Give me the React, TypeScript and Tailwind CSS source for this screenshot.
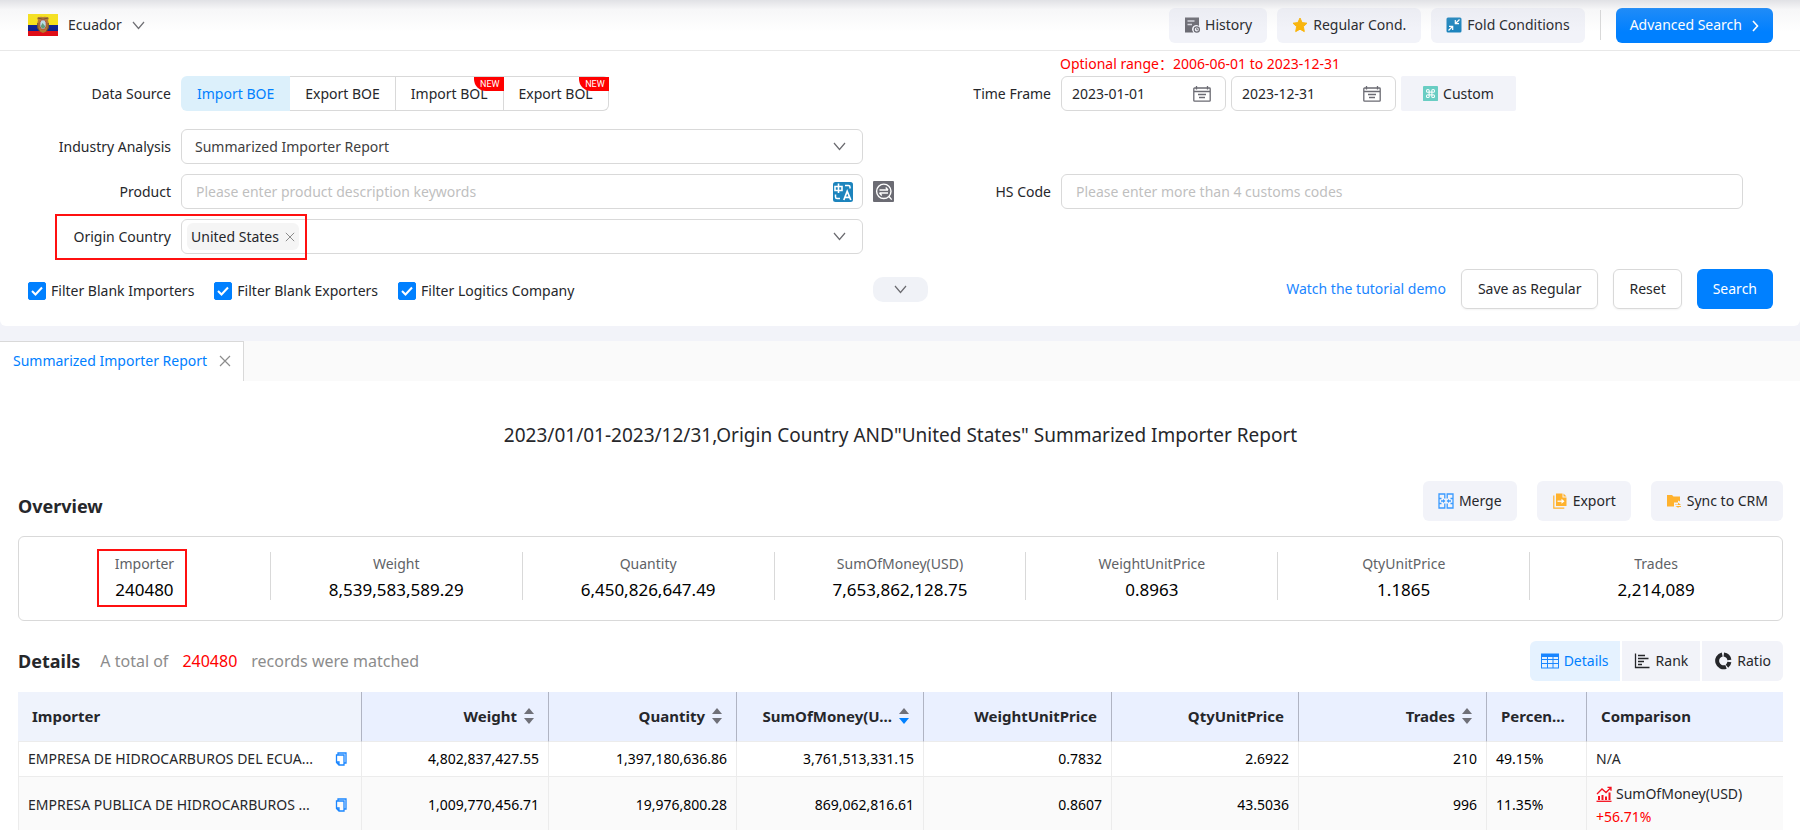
import React, { type ReactNode } from 'react';

interface IconProps {
  className?: string;
}

const ChevronDown = ({ className = '' }: IconProps) => (
  <svg viewBox="0 0 13 9" className={`h-[9px] w-[13px] shrink-0 ${className}`} fill="none" stroke="#6b6b70" strokeWidth="1.2">
    <path d="M1 1l5.500 6.500L12 1" />
  </svg>
);

const CloseIcon = ({ className = '' }: IconProps) => (
  <svg viewBox="0 0 12 12" className={`shrink-0 ${className}`} fill="none" stroke="#8c8c8c" strokeWidth="1.2">
    <path d="M1 1l10 10M11 1L1 11" />
  </svg>
);

const EcuadorFlag = () => (
  <svg viewBox="0 0 30 22" className="h-[22px] w-[30px]">
    <rect width="30" height="11" fill="#fae310" />
    <rect y="11" width="30" height="6" fill="#0a1f8f" />
    <rect y="17" width="30" height="5" fill="#e00d17" />
    <path d="M9.500 3.500q2.500-1 5.500-.5 3-.5 5.500.5 1 1-.5 2.500 1.500 4 .5 8l-2 3.500-3.500 1.500-3.500-1.500-2-3.500q-1-4 .5-8-1.500-1.500-.5-2.500z" fill="#b5772c" />
    <path d="M10 4q5 2.500 10 0M9.800 9v5l2 3.500M20.200 9v5l-2 3.500" fill="none" stroke="#6b4a22" />
    <ellipse cx="15" cy="10.500" rx="3.200" ry="4.700" fill="#b9dfe6" stroke="#b0342a" strokeWidth="0.800" />
    <path d="M12.600 12.500l2-3.500 2.800 3.500q-1 2-2.400 2t-2.400-2z" fill="#5d9c78" />
  </svg>
);

const HistoryIcon = () => (
  <svg viewBox="0 0 16 16" className="size-4">
    <path d="M1 0.500h14v8.500a4 4 0 0 0-5.500 6.500H1z" fill="#6b6b73" />
    <path d="M3.500 4h7M3.500 7.500h4.500" stroke="#d5d6de" strokeWidth="1.600" />
    <circle cx="12.800" cy="12.500" r="2.600" fill="none" stroke="#6b6b73" strokeWidth="1.200" />
    <path d="M12.800 11v1.800h1.400" fill="none" stroke="#6b6b73" />
  </svg>
);

const StarIcon = () => (
  <svg viewBox="0 0 16 16" className="size-4" fill="#fbb404" stroke="#fbb404" strokeLinejoin="round">
    <path d="M8 1l2.100 4.600 4.900.6-3.600 3.400.9 5L8 12.200 3.700 14.600l.9-5L1 6.200l4.900-.6z" />
  </svg>
);

const FoldIcon = () => (
  <svg viewBox="0 0 16 16" className="size-4">
    <rect x="0.500" y="0.500" width="15" height="15" rx="1.500" fill="#1c84bd" />
    <path d="M13.500 2.500L9.500 6.500M9.300 3v3.700H13M2.500 13.500l4-4M3 9.300h3.700V13" fill="none" stroke="#fff" strokeWidth="1.200" />
  </svg>
);

const CalendarIcon = () => (
  <svg viewBox="0 0 18 16" className="h-4 w-[18px] shrink-0" fill="none" stroke="#6b6b73" strokeWidth="1.300">
    <rect x="0.800" y="2" width="16.400" height="13.200" rx="0.800" />
    <path d="M1 5.500h16M3.500 0v3.500M14.500 0v3.500M5 8.500h8M6 11.500h6" />
  </svg>
);

const CommandIcon = () => (
  <svg viewBox="0 0 16 16" className="size-[15px]">
    <rect width="16" height="16" rx="0.500" fill="#69cdc3" />
    <g fill="none" stroke="#fff" strokeWidth="1.100">
      <rect x="6.500" y="6.500" width="3" height="3" />
      <circle cx="5.200" cy="5.200" r="1.500" />
      <circle cx="10.800" cy="5.200" r="1.500" />
      <circle cx="5.200" cy="10.800" r="1.500" />
      <circle cx="10.800" cy="10.800" r="1.500" />
    </g>
  </svg>
);

const TranslateIcon = () => (
  <svg viewBox="0 0 20 20" className="size-5">
    <rect width="20" height="20" rx="2.500" fill="#1c84bd" />
    <path d="M2 4.500h7v4H2zM5.500 1.500V11" fill="none" stroke="#fff" strokeWidth="1.600" />
    <path d="M12 3.500h3.500q1.500 0 1.500 1.500v1.500M2.500 12.500V15q0 1.500 1.500 1.500h3" fill="none" stroke="#fff" strokeWidth="1.500" />
    <path d="M10.800 18L14.200 9.200 17.800 18M12 15.300h4.600" fill="none" stroke="#fff" strokeWidth="1.700" />
  </svg>
);

const SimilarSearchIcon = () => (
  <svg viewBox="0 0 21 21" className="size-[21px]">
    <rect width="21" height="21" rx="1" fill="#6b6b73" />
    <circle cx="10.800" cy="10.300" r="7.200" fill="none" stroke="#fff" strokeWidth="1.400" />
    <path d="M16 15.500l2.700 3.200M6.500 9h8.500M15 9l-2.300-2.500M15 12H6.500M6.500 12l2.300 2.500" fill="none" stroke="#fff" strokeWidth="1.300" />
  </svg>
);

const MergeIcon = () => (
  <svg viewBox="0 0 16 16" className="size-4" fill="none" stroke="#3b9bff" strokeWidth="1.300">
    <path d="M6.800 5.500V1H1v14h5.800v-4.500M9.200 5.500V1H15v14H9.200v-4.500" />
    <path d="M1 5.500h2.500M1 10.500h2.500M15 5.500h-2.500M15 10.500h-2.500M3 8h3M13 8h-3" />
    <path d="M5 6l2.500 2L5 10zM11 6L8.500 8l2.500 2z" fill="#3b9bff" stroke="none" />
  </svg>
);

const ExportIcon = () => (
  <svg viewBox="0 0 16 16" className="size-4">
    <path d="M4 0.500h6.500V4.500h4v8.500H4z" fill="#ffb22e" />
    <path d="M11.500 0.500l3 3h-3z" fill="#ffb22e" />
    <path d="M1.800 2.500v12.700h10.500" fill="none" stroke="#ffb22e" strokeWidth="1.200" />
    <path d="M5.500 8.200h4.500" stroke="#fff" strokeWidth="1.200" />
    <path d="M9.500 5.700l3 2.500-3 2.500z" fill="#fff" />
  </svg>
);

const SyncIcon = () => (
  <svg viewBox="0 0 16 16" className="size-4">
    <path d="M1 2h5l1.500 1.500H14v5l-2-1V9.500H8v4H1z" fill="#ffb22e" />
    <path d="M9 11.500h3V9.500l3 2.500h-6zM15 13H9.500l3 2v-1H15z" fill="#ffb22e" />
  </svg>
);

const TableIcon = () => (
  <svg viewBox="0 0 18 16" className="h-4 w-[18px]" fill="none" stroke="#1a86ff">
    <rect x="0.500" y="1" width="17" height="14" />
    <path d="M0 2.500h18" strokeWidth="3" />
    <path d="M0 6.500h18M0 10.500h18M6.500 3v12M12 3v12" />
  </svg>
);

const RankIcon = () => (
  <svg viewBox="0 0 16 16" className="size-4" fill="none" stroke="#26272b" strokeWidth="1.300">
    <path d="M1.500 0.500V14.500H15.500M4 2.500h7M4 5.500h10.500M4 8.500h6M4 11.500h4" />
  </svg>
);

const RatioIcon = () => (
  <svg viewBox="0 0 18 18" className="size-[18px]" fill="none" stroke="#26272b" strokeWidth="4">
    <path d="M9.800 2.500A6.500 6.500 0 0 1 15.400 8M15.400 10A6.500 6.500 0 0 1 13 14.200M12 14.900A6.500 6.500 0 1 1 8.200 2.500" />
  </svg>
);

const CopyIcon = () => (
  <svg viewBox="0 0 12 14" className="h-3.5 w-3" fill="none" stroke="#1a86ff" strokeWidth="1.300">
    <path d="M3 3V1h8v10H9" />
    <path d="M3.500 3H9v10H4l-2.500-2.500V3zM1.500 10H4v3" />
  </svg>
);

const TrendIcon = () => (
  <svg viewBox="0 0 16 16" className="size-4" fill="none" stroke="#f5101e">
    <path d="M0.500 15.300h15" strokeWidth="1.300" />
    <path d="M3 14v-4M6.500 14V9M10 14v-3.500M13.500 14V6.500" strokeWidth="2" />
    <path d="M1 8l5-5 4 3.500L14.500 2M11.500 1.300h3.500v3.500" strokeWidth="1.300" />
  </svg>
);

const SortIcon = ({ desc = false }: { desc?: boolean }) => (
  <svg viewBox="0 0 10 16" className="h-4 w-2.5 shrink-0">
    <path d="M5 0l5 6H0z" fill="#6f7078" />
    <path d="M5 16l5-6H0z" fill={desc ? '#0080ff' : '#6f7078'} />
  </svg>
);

const FieldLabel = ({ htmlFor, children }: { htmlFor?: string; children: ReactNode }) => (
  <label htmlFor={htmlFor} className="w-[171px] shrink-0 text-right">
    {children}
  </label>
);

const ToolButton = ({ icon, children }: { icon: ReactNode; children: ReactNode }) => (
  <button type="button" className="flex h-[35px] items-center gap-[5px] rounded-md bg-[#f2f3f9] px-[15px]">
    {icon}
    {children}
  </button>
);

const ActionButton = ({ icon, children }: { icon: ReactNode; children: ReactNode }) => (
  <button type="button" className="flex h-10 items-center gap-[5px] rounded-md bg-[#f2f3f9] px-[15px]">
    {icon}
    {children}
  </button>
);

const DateField = ({ id, label, value }: { id: string; label: string; value: string }) => (
  <div className="flex h-[35px] w-[165px] items-center rounded-md border border-[#d9d9d9] pr-3.5 pl-2.5">
    <input id={id} aria-label={label} defaultValue={value} className="w-full min-w-0 outline-none" />
    <CalendarIcon />
  </div>
);

const CheckField = ({ label }: { label: string }) => (
  <label className="flex items-center gap-[5px]">
    <span className="grid">
      <input
        type="checkbox"
        defaultChecked
        className="col-start-1 row-start-1 size-[18px] appearance-none rounded-xs border border-[#d9d9d9] checked:border-[#0080ff] checked:bg-[#0080ff]"
      />
      <svg viewBox="0 0 18 18" className="pointer-events-none col-start-1 row-start-1 size-[18px]" fill="none" stroke="#fff" strokeWidth="2">
        <path d="M4 9l3.500 3.500L14 5.500" />
      </svg>
    </span>
    {label}
  </label>
);

const sources = [
  { name: 'Import BOE', active: true, isNew: false },
  { name: 'Export BOE', active: false, isNew: false },
  { name: 'Import BOL', active: false, isNew: true },
  { name: 'Export BOL', active: false, isNew: true },
];

const overview = [
  { label: 'Importer', value: '240480', marked: true },
  { label: 'Weight', value: '8,539,583,589.29' },
  { label: 'Quantity', value: '6,450,826,647.49' },
  { label: 'SumOfMoney(USD)', value: '7,653,862,128.75' },
  { label: 'WeightUnitPrice', value: '0.8963' },
  { label: 'QtyUnitPrice', value: '1.1865' },
  { label: 'Trades', value: '2,214,089' },
];

const columns: { title: string; align: 'left' | 'right'; sort?: 'none' | 'desc' }[] = [
  { title: 'Importer', align: 'left' },
  { title: 'Weight', align: 'right', sort: 'none' },
  { title: 'Quantity', align: 'right', sort: 'none' },
  { title: 'SumOfMoney(U...', align: 'right', sort: 'desc' },
  { title: 'WeightUnitPrice', align: 'right' },
  { title: 'QtyUnitPrice', align: 'right' },
  { title: 'Trades', align: 'right', sort: 'none' },
  { title: 'Percen...', align: 'left' },
  { title: 'Comparison', align: 'left' },
];

const rows = [
  {
    importer: 'EMPRESA DE HIDROCARBUROS DEL ECUA...',
    values: ['4,802,837,427.55', '1,397,180,636.86', '3,761,513,331.15', '0.7832', '2.6922', '210'],
    percent: '49.15%',
    change: null,
  },
  {
    importer: 'EMPRESA PUBLICA DE HIDROCARBUROS ...',
    values: ['1,009,770,456.71', '19,976,800.28', '869,062,816.61', '0.8607', '43.5036', '996'],
    percent: '11.35%',
    change: '+56.71%',
  },
];

function TopBar() {
  return (
    <header className="flex h-[51px] items-center justify-between border-b border-[#e8e8e8] pr-[27px] pl-7">
      <button type="button" className="flex items-center gap-2.5">
        <EcuadorFlag />
        Ecuador
        <ChevronDown />
      </button>
      <div className="flex items-center gap-2.5">
        <ToolButton icon={<HistoryIcon />}>History</ToolButton>
        <ToolButton icon={<StarIcon />}>Regular Cond.</ToolButton>
        <ToolButton icon={<FoldIcon />}>Fold Conditions</ToolButton>
        <span className="mx-[5px] h-[30px] w-px bg-[#d9d9d9]" />
        <button type="button" className="flex h-[35px] items-center gap-2.5 rounded-md bg-[#0080ff] px-3.5 text-white">
          Advanced Search
          <svg viewBox="0 0 7 12" className="mt-0.5 h-3 w-[7px]" fill="none" stroke="#fff" strokeWidth="1.600">
            <path d="M1 1l4.500 5L1 11" />
          </svg>
        </button>
      </div>
    </header>
  );
}

function SearchForm() {
  return (
    <form className="rounded-b-md bg-white pb-[17px]">
      <div className="grid grid-cols-2 pr-10">
        <div className="flex items-center gap-2.5 pt-[25px]">
          <span className="w-[171px] text-right">Data Source</span>
          <div className="flex">
            {sources.map((s) => (
              <button
                key={s.name}
                type="button"
                className={
                  s.active
                    ? 'h-[35px] rounded-l-md bg-[#dcf0fb] px-4 text-[#0080ff]'
                    : 'relative h-[35px] border border-l-0 border-[#d9d9d9] px-[15px] last:rounded-r-md'
                }
              >
                {s.name}
                {s.isNew && (
                  <span className="absolute top-0 -right-px rounded-bl-xl bg-[#ff0000] pr-1 pl-1.5 font-['Roboto',sans-serif] text-[9px] leading-[14px] text-white">
                    NEW
                  </span>
                )}
              </button>
            ))}
          </div>
        </div>
        <div>
          <p className="h-[25px] pt-[3px] pl-[180px] leading-5 text-[#ff0000]">Optional range：2006-06-01 to 2023-12-31</p>
          <div className="flex items-center">
            <FieldLabel htmlFor="date-from">Time Frame</FieldLabel>
            <div className="ml-2.5 flex gap-[5px]">
              <DateField id="date-from" label="Start date" value="2023-01-01" />
              <DateField id="date-to" label="End date" value="2023-12-31" />
              <button type="button" className="flex h-[35px] w-[115px] items-center justify-center gap-[5px] rounded-xs bg-[#f2f3f9]">
                <CommandIcon />
                Custom
              </button>
            </div>
          </div>
        </div>
      </div>

      <div className="mt-[18px] grid grid-cols-2 gap-y-2.5 pr-10">
        <div className="col-start-1 flex items-center gap-2.5">
          <FieldLabel htmlFor="analysis">Industry Analysis</FieldLabel>
          <div className="mr-[17px] grid flex-1 items-center">
            <select
              id="analysis"
              className="col-start-1 row-start-1 h-[35px] appearance-none rounded-md border border-[#d9d9d9] bg-white px-[13px] text-[#404040] outline-none"
            >
              <option>Summarized Importer Report</option>
            </select>
            <ChevronDown className="pointer-events-none col-start-1 row-start-1 mr-[17px] justify-self-end" />
          </div>
        </div>
        <div className="relative col-start-1 flex items-center gap-2.5">
          <FieldLabel htmlFor="product">Product</FieldLabel>
          <div className="mr-[17px] flex h-[35px] flex-1 items-center rounded-md border border-[#d9d9d9] pr-[9px] pl-3.5">
            <input
              id="product"
              placeholder="Please enter product description keywords"
              className="flex-1 outline-none placeholder:text-[#bfbfbf]"
            />
            <button type="button" aria-label="Translate">
              <TranslateIcon />
            </button>
          </div>
          <button type="button" aria-label="Similar search" className="absolute top-[7px] -right-3.5">
            <SimilarSearchIcon />
          </button>
        </div>
        <div className="flex items-center gap-2.5">
          <FieldLabel htmlFor="hs-code">HS Code</FieldLabel>
          <input
            id="hs-code"
            placeholder="Please enter more than 4 customs codes"
            className="mr-[17px] h-[35px] flex-1 rounded-md border border-[#d9d9d9] px-3.5 outline-none placeholder:text-[#bfbfbf]"
          />
        </div>
        <div className="relative col-start-1 flex items-center gap-2.5">
          <FieldLabel htmlFor="origin">Origin Country</FieldLabel>
          <div className="mr-[17px] flex h-[35px] flex-1 items-center rounded-md border border-[#d9d9d9] pr-4 pl-[5px]">
            <span className="flex h-[27px] items-center gap-1.5 rounded-md bg-[#f5f5f5] px-1">
              United States
              <button type="button" aria-label="Remove United States">
                <CloseIcon className="size-2.5" />
              </button>
            </span>
            <input id="origin" className="min-w-0 flex-1 outline-none" />
            <ChevronDown />
          </div>
          <div className="pointer-events-none absolute -top-[5px] -bottom-1.5 left-[55px] w-[252px] border-2 border-[#ff1010]" />
        </div>
      </div>

      <div className="mt-[15px] grid grid-cols-[1fr_auto_1fr] items-center pr-[27px] pl-7">
        <div className="flex gap-5 pt-1">
          <CheckField label="Filter Blank Importers" />
          <CheckField label="Filter Blank Exporters" />
          <CheckField label="Filter Logitics Company" />
        </div>
        <button type="button" aria-label="More conditions" className="flex h-[25px] w-[55px] items-center justify-center rounded-[10px] bg-[#f0f2f7]">
          <ChevronDown />
        </button>
        <div className="flex items-center justify-end gap-[15px]">
          <a href="#demo" className="text-[#1a86ff]">
            Watch the tutorial demo
          </a>
          <button type="button" className="h-10 rounded-md border border-[#d9d9d9] px-4 shadow-xs">
            Save as Regular
          </button>
          <button type="reset" className="h-10 rounded-md border border-[#d9d9d9] px-[15px] shadow-xs">
            Reset
          </button>
          <button type="button" className="h-10 rounded-md bg-[#0080ff] px-4 text-white">
            Search
          </button>
        </div>
      </div>
    </form>
  );
}

function Overview() {
  return (
    <section>
      <div className="flex items-center justify-between">
        <h2 className="pt-2.5 text-lg font-bold">Overview</h2>
        <div className="flex gap-5">
          <ActionButton icon={<MergeIcon />}>Merge</ActionButton>
          <ActionButton icon={<ExportIcon />}>Export</ActionButton>
          <ActionButton icon={<SyncIcon />}>Sync to CRM</ActionButton>
        </div>
      </div>
      <div className="mt-[15px] grid grid-cols-7 divide-x divide-[#d9d9d9] rounded-md border border-[#d9d9d9] pt-[15px] pb-5">
        {overview.map((item) => (
          <div key={item.label} className="relative flex h-12 flex-col items-center">
            <span className="leading-6 text-[#606266]">{item.label}</span>
            <span className="text-[17px] leading-7 text-black">{item.value}</span>
            {item.marked && (
              <div className="pointer-events-none absolute -top-[3px] -bottom-[7px] mr-[5px] w-[90px] border-2 border-[#ff1010]" />
            )}
          </div>
        ))}
      </div>
    </section>
  );
}

function Details() {
  return (
    <section className="mt-5">
      <div className="flex items-center justify-between">
        <div className="flex items-center">
          <h2 className="text-lg font-bold">Details</h2>
          <p className="ml-5 flex gap-3.5 text-base text-[#8c8c8c]">
            A total of <span className="text-[#ff0000]">240480</span> records were matched
          </p>
        </div>
        <div className="flex gap-0.5">
          <button type="button" className="flex h-10 items-center gap-[5px] rounded-l-md bg-[#e5f2ff] px-[11px] text-[#0080ff]">
            <TableIcon />
            Details
          </button>
          <button type="button" className="flex h-10 items-center gap-1.5 bg-[#f2f3f9] px-3">
            <RankIcon />
            Rank
          </button>
          <button type="button" className="flex h-10 items-center gap-[5px] rounded-r-md bg-[#f2f3f9] px-3">
            <RatioIcon />
            Ratio
          </button>
        </div>
      </div>

      <table className="mt-[11px] w-full table-fixed border-separate border-spacing-0">
        <colgroup>
          <col className="w-[344px]" />
          <col className="w-[187px]" />
          <col className="w-[188px]" />
          <col className="w-[187px]" />
          <col className="w-[188px]" />
          <col className="w-[187px]" />
          <col className="w-[188px]" />
          <col className="w-[100px]" />
          <col />
        </colgroup>
        <thead>
          <tr className="h-[50px]">
            {columns.map((col) => (
              <th
                key={col.title}
                className="border-r border-b border-r-[#b0b4c3] border-b-[#ececec] bg-[#eaf0ff] px-3.5 text-[15px] font-bold whitespace-nowrap first:bg-[#eff3fc] last:border-r-0"
              >
                <span className={`flex items-center gap-[7px] ${col.align === 'right' ? 'justify-end' : ''}`}>
                  {col.title}
                  {col.sort && <SortIcon desc={col.sort === 'desc'} />}
                </span>
              </th>
            ))}
          </tr>
        </thead>
        <tbody className="[&_td]:border-r [&_td]:border-b [&_td]:border-[#ececec] [&_td]:px-[9px]">
          {rows.map((row) => (
            <tr key={row.importer} className="h-[35px] even:bg-[#fafafa]">
              <td className="border-l">
                <span className="flex items-center justify-between pr-[5px]">
                  <span className="whitespace-nowrap">{row.importer}</span>
                  <button type="button" aria-label="Copy importer name">
                    <CopyIcon />
                  </button>
                </span>
              </td>
              {row.values.map((value) => (
                <td key={value} className="text-right text-black">
                  {value}
                </td>
              ))}
              <td className="text-black">{row.percent}</td>
              <td className="border-r-0!">
                {row.change ? (
                  <div className="py-[5px] leading-[23px]">
                    <span className="flex items-center gap-1">
                      <TrendIcon />
                      SumOfMoney(USD)
                    </span>
                    <span className="block text-[#ff0000]">{row.change}</span>
                  </div>
                ) : (
                  'N/A'
                )}
              </td>
            </tr>
          ))}
        </tbody>
      </table>
    </section>
  );
}

export default function App() {
  return (
    <div className="relative overflow-hidden bg-[#f2f3f9] font-['Noto_Sans','Noto_Sans_CJK_SC',sans-serif] text-sm text-[#26272b]">
      <div className="pointer-events-none absolute inset-x-0 top-0 z-10 h-8 bg-linear-to-b from-[#c8c9d0]/55 via-[#c8c9d0]/15 via-30% to-transparent" />
      <div className="bg-white">
        <TopBar />
      </div>
      <SearchForm />
      <div className="mt-[15px] flex bg-[#fafafa]">
        <div className="flex h-10 items-center gap-3 border-t border-r border-[#d9d9d9] bg-white pr-3 pb-0.5 pl-[13px]">
          <button type="button" className="text-[#0080ff]">
            Summarized Importer Report
          </button>
          <button type="button" aria-label="Close tab">
            <CloseIcon className="size-3" />
          </button>
        </div>
      </div>
      <main className="bg-white pt-10 pr-[17px] pl-[18px]">
        <h1 className="mb-8 text-center text-[19px] leading-7">
          2023/01/01-2023/12/31,Origin Country AND"United States" Summarized Importer Report
        </h1>
        <Overview />
        <Details />
      </main>
    </div>
  );
}
